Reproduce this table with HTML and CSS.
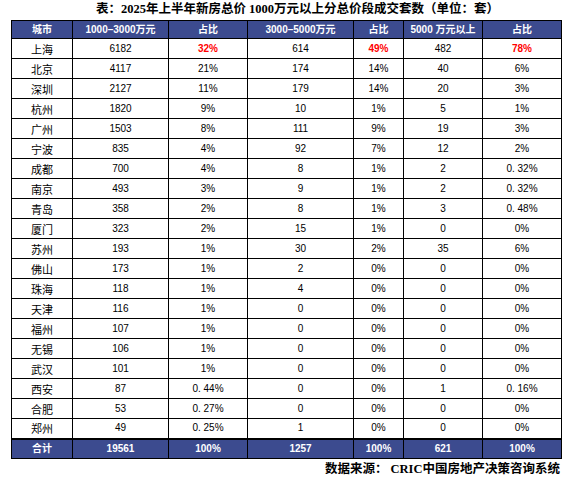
FILE: index.html
```html
<!DOCTYPE html>
<html lang="zh-CN">
<head>
<meta charset="utf-8">
<link rel="stylesheet" href="styles.css">
</head>
<body>
<div class="page">
  <h1 class="title">表：2025年上半年新房总价 1000万元以上分总价段成交套数（单位：套）</h1>
  <table class="data">
    <colgroup>
      <col class="c1"><col class="c2"><col class="c3"><col class="c4"><col class="c5"><col class="c6"><col class="c7">
    </colgroup>
    <thead>
      <tr class="head"><th>城市</th><th>1000–3000万元</th><th>占比</th><th>3000–5000万元</th><th>占比</th><th>5000 万元以上</th><th>占比</th></tr>
    </thead>
    <tbody>
      <tr><td class="city">上海</td><td>6182</td><td class="red">32%</td><td>614</td><td class="red">49%</td><td>482</td><td class="red">78%</td></tr>
      <tr><td class="city">北京</td><td>4117</td><td>21%</td><td>174</td><td>14%</td><td>40</td><td>6%</td></tr>
      <tr><td class="city">深圳</td><td>2127</td><td>11%</td><td>179</td><td>14%</td><td>20</td><td>3%</td></tr>
      <tr><td class="city">杭州</td><td>1820</td><td>9%</td><td>10</td><td>1%</td><td>5</td><td>1%</td></tr>
      <tr><td class="city">广州</td><td>1503</td><td>8%</td><td>111</td><td>9%</td><td>19</td><td>3%</td></tr>
      <tr><td class="city">宁波</td><td>835</td><td>4%</td><td>92</td><td>7%</td><td>12</td><td>2%</td></tr>
      <tr><td class="city">成都</td><td>700</td><td>4%</td><td>8</td><td>1%</td><td>2</td><td>0. 32%</td></tr>
      <tr><td class="city">南京</td><td>493</td><td>3%</td><td>9</td><td>1%</td><td>2</td><td>0. 32%</td></tr>
      <tr><td class="city">青岛</td><td>358</td><td>2%</td><td>8</td><td>1%</td><td>3</td><td>0. 48%</td></tr>
      <tr><td class="city">厦门</td><td>323</td><td>2%</td><td>15</td><td>1%</td><td>0</td><td>0%</td></tr>
      <tr><td class="city">苏州</td><td>193</td><td>1%</td><td>30</td><td>2%</td><td>35</td><td>6%</td></tr>
      <tr><td class="city">佛山</td><td>173</td><td>1%</td><td>2</td><td>0%</td><td>0</td><td>0%</td></tr>
      <tr><td class="city">珠海</td><td>118</td><td>1%</td><td>4</td><td>0%</td><td>0</td><td>0%</td></tr>
      <tr><td class="city">天津</td><td>116</td><td>1%</td><td>0</td><td>0%</td><td>0</td><td>0%</td></tr>
      <tr><td class="city">福州</td><td>107</td><td>1%</td><td>0</td><td>0%</td><td>0</td><td>0%</td></tr>
      <tr><td class="city">无锡</td><td>106</td><td>1%</td><td>0</td><td>0%</td><td>0</td><td>0%</td></tr>
      <tr><td class="city">武汉</td><td>101</td><td>1%</td><td>0</td><td>0%</td><td>0</td><td>0%</td></tr>
      <tr><td class="city">西安</td><td>87</td><td>0. 44%</td><td>0</td><td>0%</td><td>1</td><td>0. 16%</td></tr>
      <tr><td class="city">合肥</td><td>53</td><td>0. 27%</td><td>0</td><td>0%</td><td>0</td><td>0%</td></tr>
      <tr><td class="city">郑州</td><td>49</td><td>0. 25%</td><td>1</td><td>0%</td><td>0</td><td>0%</td></tr>
    </tbody>
    <tfoot>
      <tr class="total"><td>合计</td><td>19561</td><td>100%</td><td>1257</td><td>100%</td><td>621</td><td>100%</td></tr>
    </tfoot>
  </table>
  <p class="source">数据来源： CRIC中国房地产决策咨询系统</p>
</div>
</body>
</html>
```
FILE: styles.css
```css
html, body {
  margin: 0;
  padding: 0;
  background: #ffffff;
}

.page {
  width: 571px;
  height: 487px;
  overflow: hidden;
}

.title {
  margin: 0;
  height: 20px;
  line-height: 18px;
  padding-left: 24px;
  text-align: center;
  font-family: "Liberation Serif", "Noto Sans CJK SC", serif;
  font-weight: 700;
  font-size: 12.5px;
  color: #000;
}

.data {
  margin-left: 11px;
  width: 550px;
  table-layout: fixed;
  border-collapse: collapse;
  font-family: "Liberation Sans", "Noto Sans CJK SC", sans-serif;
  font-size: 10px;
  color: #000;
}

.c1 { width: 61px; }
.c2 { width: 96px; }
.c3 { width: 79px; }
.c4 { width: 106px; }
.c5 { width: 50px; }
.c6 { width: 79px; }
.c7 { width: 79px; }

.data th,
.data td {
  border: 1px solid #000;
  padding: 0;
  text-align: center;
  vertical-align: middle;
  line-height: 12px;
  white-space: nowrap;
}

.data tbody tr {
  height: 20px;
}

.head {
  height: 18px;
}

.head th,
.total td {
  background: #3c4b8f;
  color: #ffffff;
  font-weight: 700;
  font-size: 10px;
}

.total {
  height: 20px;
}

.total td {
  border-top: 2px solid #000;
}

.city {
  font-family: "Noto Sans CJK SC", sans-serif;
  font-size: 11px;
}

.red {
  color: #ff0000;
  font-weight: 700;
}

.source {
  margin: 0;
  padding-right: 11px;
  height: 22px;
  line-height: 20px;
  text-align: right;
  font-family: "Liberation Serif", "Noto Sans CJK SC", serif;
  font-weight: 700;
  font-size: 12.5px;
  color: #000;
}
```
